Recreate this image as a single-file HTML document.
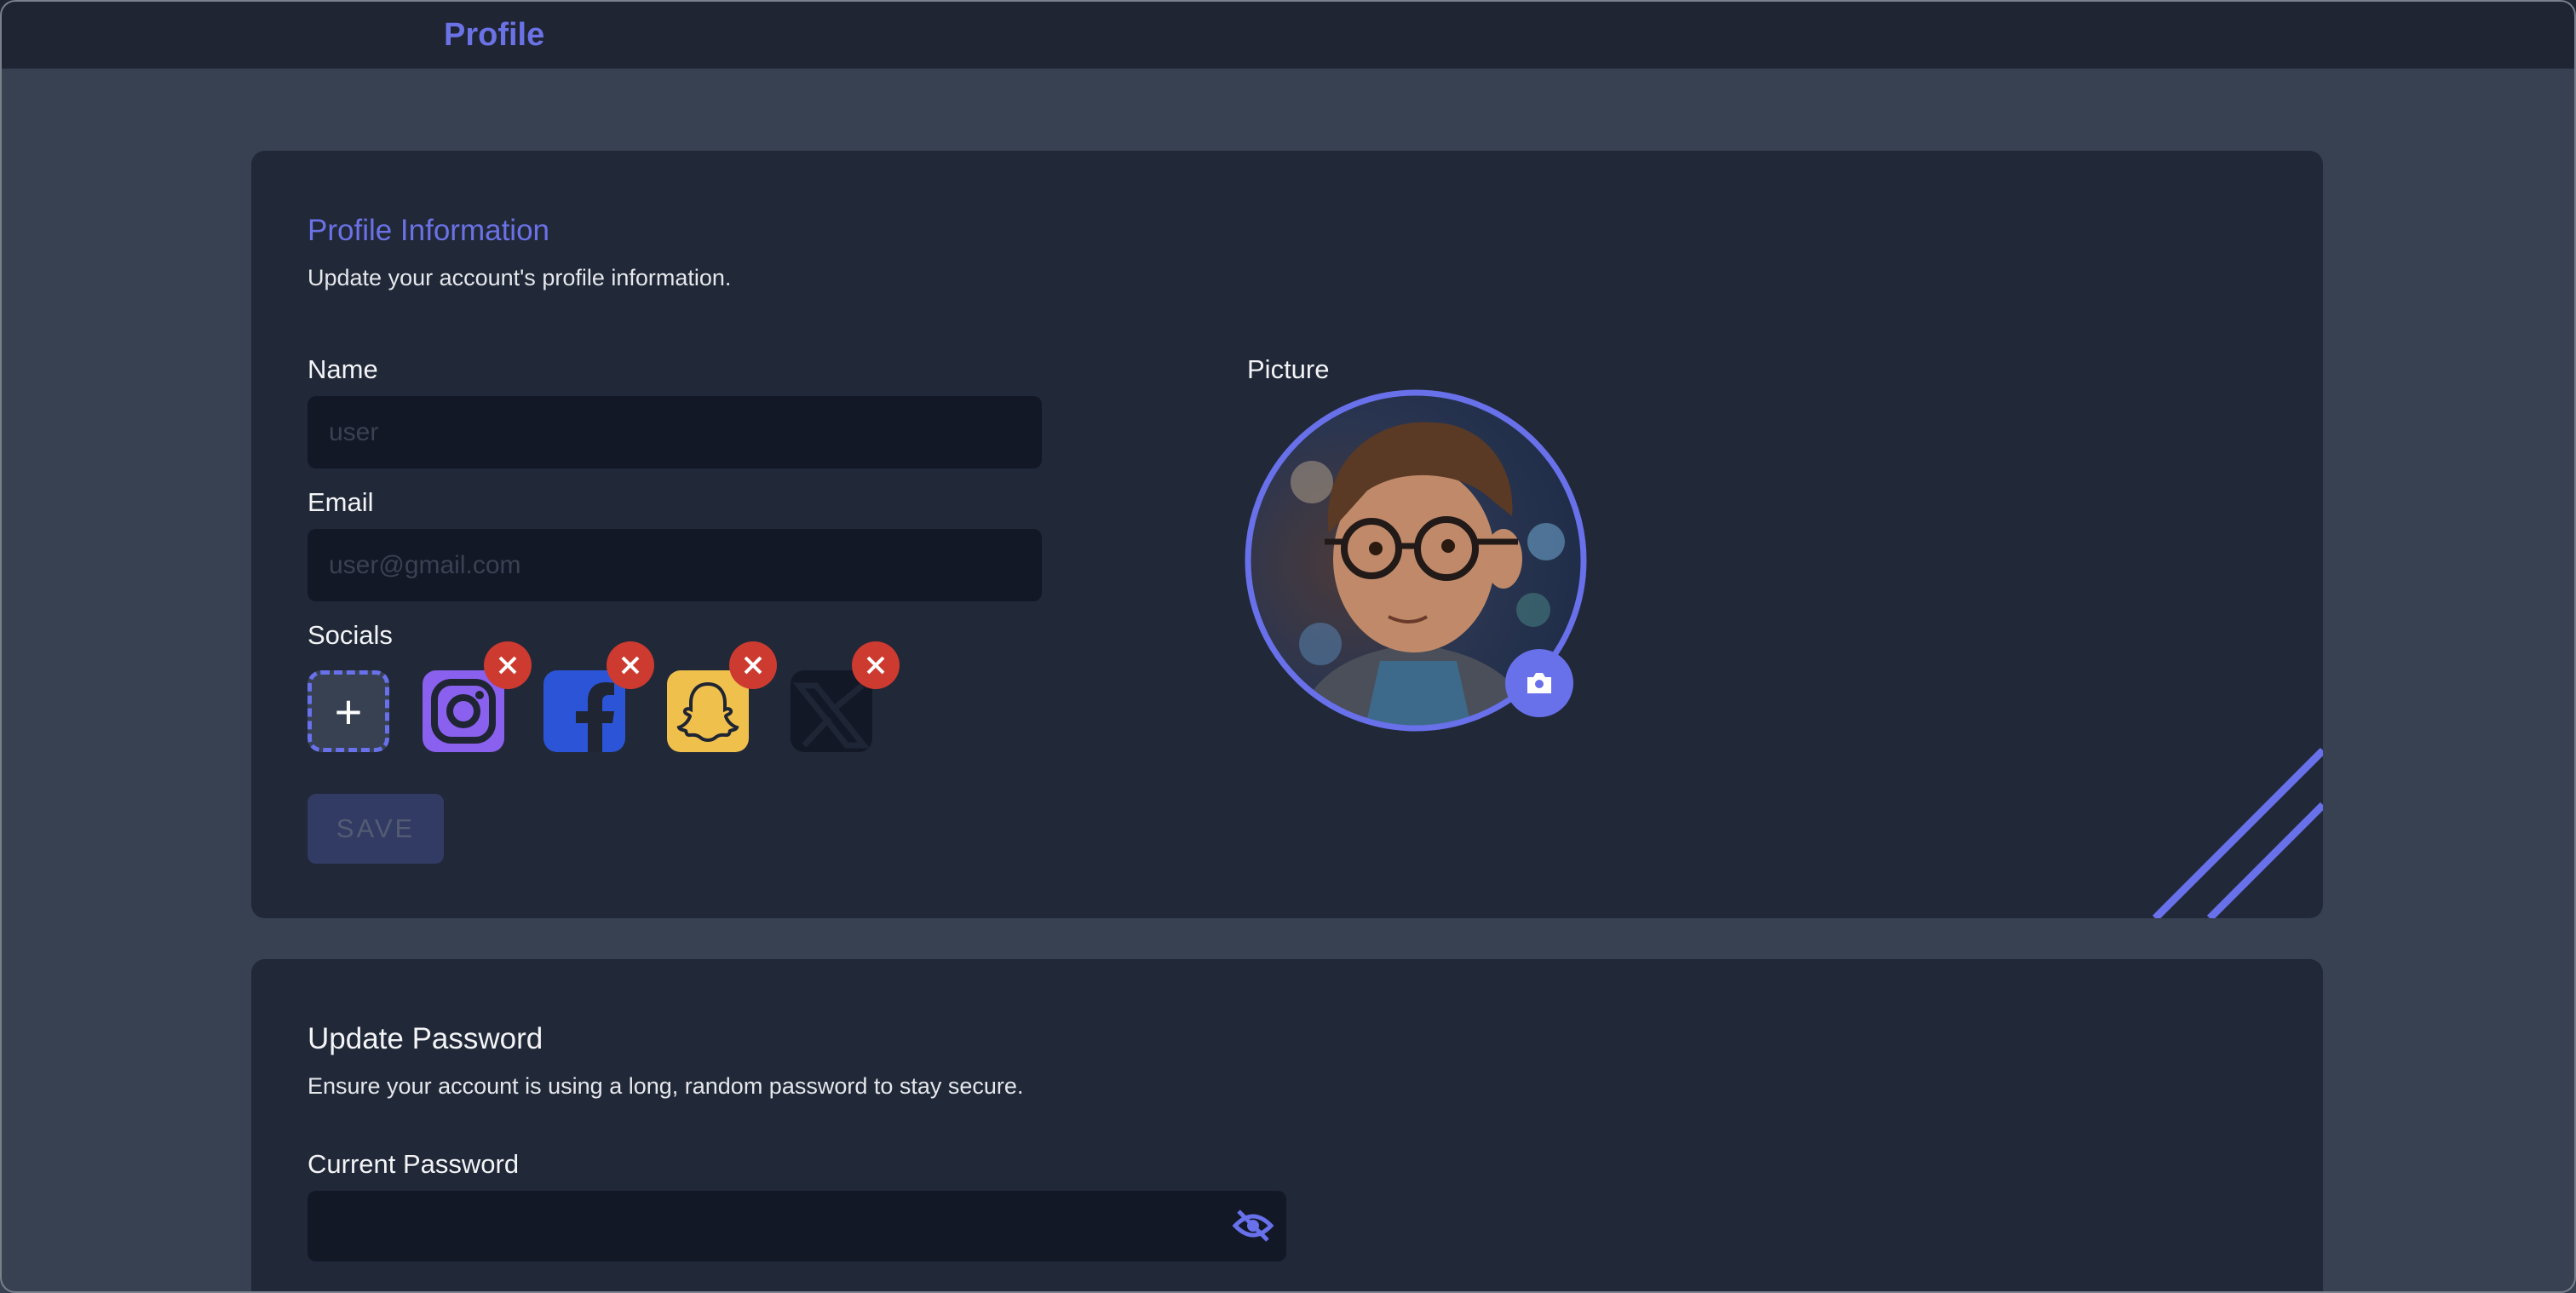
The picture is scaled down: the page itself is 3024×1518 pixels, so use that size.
<!DOCTYPE html>
<html style="width:3024px;height:1518px;overflow:hidden"><head><meta charset="utf-8"><style>
*{box-sizing:border-box;margin:0;padding:0}
body{width:3024px;height:1518px;background:#384151;font-family:"Liberation Sans",sans-serif;overflow:hidden;position:relative;color:#fff}
.frame{position:absolute;left:0;top:0;width:3024px;height:1518px;border:2px solid #7a808c;border-radius:18px;pointer-events:none;z-index:10}
.top{position:absolute;left:0;top:0;width:3024px;height:81px;background:#1f2532;border-bottom:1px solid #2a3140}
.abs{position:absolute}
.card{position:absolute;left:295px;width:2432px;background:#212838;border-radius:16px;overflow:hidden}
.lbl{position:absolute;font-size:31px;color:#f3f4f6}
.inp{position:absolute;background:#121826;border-radius:10px;font-size:30px;color:#3a4152;padding-left:25px;display:flex;align-items:center}
.soc{position:absolute;top:787px;width:96px;height:96px;border-radius:16px}
.x{position:absolute;top:753px;width:56px;height:56px;border-radius:50%;background:#cd3a30;display:flex;align-items:center;justify-content:center}
</style></head><body>
<div class="frame"></div>
<div class="top"></div>
<div class="abs" style="left:521px;top:20px;font-size:38px;color:#6b72e6;font-weight:bold">Profile</div>

<div class="card" style="top:177px;height:901px">
<svg class="abs" style="left:0;top:0" width="2432" height="901"><line x1="2235" y1="901" x2="2432" y2="704" stroke="#6870ea" stroke-width="9"/><line x1="2299" y1="901" x2="2432" y2="768" stroke="#6870ea" stroke-width="9"/></svg>
</div>
<div class="abs" style="left:361px;top:251px;font-size:35px;color:#6b72e6">Profile Information</div>
<div class="abs" style="left:361px;top:311px;font-size:27px;color:#e5e7eb">Update your account's profile information.</div>
<div class="lbl" style="left:361px;top:416px">Name</div>
<div class="inp" style="left:361px;top:465px;width:862px;height:85px">user</div>
<div class="lbl" style="left:361px;top:572px">Email</div>
<div class="inp" style="left:361px;top:621px;width:862px;height:85px">user@gmail.com</div>
<div class="lbl" style="left:361px;top:728px">Socials</div>

<div class="soc" style="left:361px;background:#374151;border:5px dashed #6870ea;display:flex;align-items:center;justify-content:center;font-size:56px;color:#fff">+</div>
<div class="soc" style="left:496px;background:#8a60ef"><svg width="96" height="96"><rect x="14" y="14" width="68" height="68" rx="20" fill="none" stroke="#1f2532" stroke-width="8"/><circle cx="48" cy="48" r="16" fill="none" stroke="#1f2532" stroke-width="8"/><circle cx="67" cy="29" r="5" fill="#1f2532"/></svg></div>
<div class="soc" style="left:638px;background:#2b55d6;overflow:hidden"><svg width="96" height="96"><path d="M52 96V62H38V48h14V36c0-14 8-22 21-22 5 0 10 1 10 1v14h-6c-6 0-8 3-8 8v11h14l-2 14H69v34z" fill="#1f2532"/></svg></div>
<div class="soc" style="left:783px;background:#f0c04c"><svg width="96" height="96"><path d="M48 16c-14 0-20 11-20 22v8c-4-2-8 0-7 3 1 3 6 3 6 5-2 6-7 11-13 13 1 3 6 3 8 4 1 3 1 5 4 5 4 0 8-1 12 2 4 3 6 4 10 4s6-1 10-4c4-3 8-2 12-2 3 0 3-2 4-5 2-1 7-1 8-4-6-2-11-7-13-13 0-2 5-2 6-5 1-3-3-5-7-3v-8c0-11-6-22-20-22z" fill="none" stroke="#1f2532" stroke-width="4"/></svg></div>
<div class="soc" style="left:928px;background:#121826"><svg width="96" height="96"><path d="M10 18h20l56 70H66z M16 88l30-32 M50 46l34-28" stroke="#1e2535" stroke-width="7" fill="none"/></svg></div>
<div class="x" style="left:568px"><svg width="24" height="24"><path d="M3 3L21 21M21 3L3 21" stroke="#fff" stroke-width="4"/></svg></div>
<div class="x" style="left:712px"><svg width="24" height="24"><path d="M3 3L21 21M21 3L3 21" stroke="#fff" stroke-width="4"/></svg></div>
<div class="x" style="left:856px"><svg width="24" height="24"><path d="M3 3L21 21M21 3L3 21" stroke="#fff" stroke-width="4"/></svg></div>
<div class="x" style="left:1000px"><svg width="24" height="24"><path d="M3 3L21 21M21 3L3 21" stroke="#fff" stroke-width="4"/></svg></div>

<div class="abs" style="left:361px;top:932px;width:160px;height:82px;background:#323b63;border-radius:10px;color:#535c72;font-size:31px;letter-spacing:3px;display:flex;align-items:center;justify-content:center">SAVE</div>

<div class="lbl" style="left:1464px;top:416px">Picture</div>
<svg class="abs" style="left:1460px;top:456px" width="410" height="410">
<defs><radialGradient id="bg" cx="0.3" cy="0.5" r="0.8"><stop offset="0" stop-color="#4a3a3a"/><stop offset="0.5" stop-color="#2a3550"/><stop offset="1" stop-color="#1a2a45"/></radialGradient>
<clipPath id="c"><circle cx="202" cy="202" r="195"/></clipPath></defs>
<g clip-path="url(#c)">
<rect width="410" height="410" fill="url(#bg)"/>
<circle cx="355" cy="180" r="22" fill="#6aa0c8" opacity=".6"/><circle cx="90" cy="300" r="25" fill="#5a8ab8" opacity=".5"/><circle cx="340" cy="260" r="20" fill="#4a8a88" opacity=".5"/><circle cx="80" cy="110" r="25" fill="#d8c0a0" opacity=".4"/>
<path d="M60 410c10-70 60-100 140-110 80 10 130 40 150 110z" fill="#4a4f5a"/>
<path d="M140 410l20-90h90l20 90z" fill="#3d6a8a"/>
<ellipse cx="200" cy="200" rx="95" ry="110" fill="#c08a6a"/>
<ellipse cx="305" cy="200" rx="22" ry="35" fill="#c08a6a"/>
<path d="M100 170c-10-80 50-135 120-130 60 0 100 50 95 110l-25-20c-30-30-100-40-145-10z" fill="#5a3a25"/>
<circle cx="150" cy="188" r="32" fill="none" stroke="#221a18" stroke-width="8"/><circle cx="238" cy="188" r="34" fill="none" stroke="#221a18" stroke-width="8"/>
<path d="M182 185h22M272 180h50M95 180h24" stroke="#221a18" stroke-width="7"/>
<circle cx="155" cy="188" r="8" fill="#2a1a10"/><circle cx="240" cy="185" r="8" fill="#2a1a10"/>
<path d="M170 268q25 12 45 0" stroke="#6a3a2a" stroke-width="4" fill="none"/>
</g>
<circle cx="202" cy="202" r="197" fill="none" stroke="#6870ea" stroke-width="7"/>
</svg>
<div class="abs" style="left:1767px;top:762px;width:80px;height:80px;border-radius:50%;background:#6870ea;display:flex;align-items:center;justify-content:center"><svg width="32" height="28"><path d="M2 7h7l3-5h8l3 5h7v19H2z" fill="#fff"/><circle cx="16" cy="15" r="5" fill="#6870ea"/></svg></div>

<div class="card" style="top:1126px;height:392px;border-radius:16px 16px 0 0"></div>
<div class="abs" style="left:361px;top:1200px;font-size:35px;color:#f3f4f6">Update Password</div>
<div class="abs" style="left:361px;top:1260px;font-size:27px;color:#e5e7eb">Ensure your account is using a long, random password to stay secure.</div>
<div class="lbl" style="left:361px;top:1349px">Current Password</div>
<div class="inp" style="left:361px;top:1398px;width:1149px;height:83px"></div>
<svg class="abs" style="left:1446px;top:1418px" width="50" height="42"><path d="M4 21q21-22 42 0q-21 22-42 0z" fill="none" stroke="#6870ea" stroke-width="5"/><circle cx="25" cy="21" r="7" fill="#6870ea"/><path d="M8 4L42 38" stroke="#6870ea" stroke-width="5"/></svg>
</body></html>
